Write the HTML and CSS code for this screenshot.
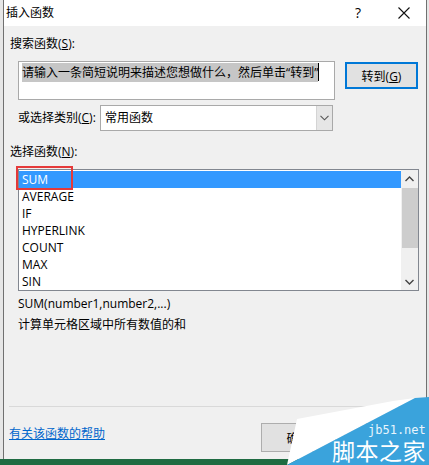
FILE: index.html
```html
<!DOCTYPE html>
<html lang="zh-CN">
<head>
<meta charset="utf-8">
<title>插入函数</title>
<link rel="stylesheet" href="styles.css">
</head>
<body>
<div class="screen">
  <div class="dialog">
    <div class="titlebar">
      <span class="title">插入函数</span>
      <span class="help">?</span>
      <span class="close"><svg width="12" height="12" viewBox="0 0 12 12"><path d="M0.5 0.5 L11.5 11.5 M11.5 0.5 L0.5 11.5" stroke="#111" stroke-width="1.1" fill="none"/></svg></span>
    </div>
    <div class="content">
      <div class="label l1">搜索函数(<u>S</u>):</div>
      <div class="search-row">
        <div class="search"><span class="selected">请输入一条简短说明来描述您想做什么，然后单击“转到”</span><span class="caret"></span></div>
        <button class="btn btn-go">转到(<u>G</u>)</button>
      </div>
      <div class="cat-row">
        <span class="cat-label">或选择类别(<u>C</u>):</span>
        <div class="select">
          <span class="val">常用函数</span>
          <span class="drop"><svg width="9" height="6" viewBox="0 0 9 6"><path d="M0.5 0.8 L4.5 4.8 L8.5 0.8" stroke="#555" stroke-width="1.1" fill="none"/></svg></span>
        </div>
      </div>
      <div class="label l2">选择函数(<u>N</u>):</div>
      <div class="listbox">
        <ul class="items">
          <li class="sel">SUM</li>
          <li>AVERAGE</li>
          <li>IF</li>
          <li>HYPERLINK</li>
          <li>COUNT</li>
          <li>MAX</li>
          <li>SIN</li>
        </ul>
        <div class="scrollbar">
          <div class="arrow"><svg width="9" height="6" viewBox="0 0 9 6"><path d="M0.5 5 L4.5 1 L8.5 5" stroke="#444" stroke-width="1.4" fill="none"/></svg></div>
          <div class="track"><div class="thumb"></div></div>
          <div class="arrow"><svg width="9" height="6" viewBox="0 0 9 6"><path d="M0.5 1 L4.5 5 L8.5 1" stroke="#444" stroke-width="1.4" fill="none"/></svg></div>
        </div>
        <div class="redbox"></div>
      </div>
      <div class="sig">SUM(number1,number2,...)</div>
      <div class="desc">计算单元格区域中所有数值的和</div>
      <div class="sep"></div>
      <div class="footer">
        <a class="help-link" href="#">有关该函数的帮助</a>
        <div class="buttons">
          <button class="btn">确定</button>
          <span class="btn btn-hidden"></span>
        </div>
      </div>
    </div>
  </div>
  <div class="taskbar"></div>
  <div class="watermark">
    <svg class="wm-shape" width="149" height="70" viewBox="0 0 149 70">
      <polygon points="7,70 17,24 113,6 135,3" fill="#ffffff"/>
      <polygon points="7,70 135,3 149,2 149,70" fill="#3aa3dc"/>
    </svg>
    <div class="wm-url">jb51.net</div>
    <div class="wm-name">脚本之家</div>
  </div>
</div>
</body>
</html>
```

FILE: styles.css
```css
* { box-sizing: border-box; }
html, body { margin: 0; padding: 0; }
body {
  width: 429px;
  height: 465px;
  overflow: hidden;
  background: #e6e6e6;
  font-family: "Open Sans", "Noto Sans CJK SC", sans-serif;
  font-size: 12px;
  color: #000;
}
.screen {
  position: relative;
  width: 429px;
  height: 465px;
  display: flex;
  flex-direction: column;
}
.dialog {
  margin-left: 3px;
  width: 424px;
  height: 459px;
  border-left: 1px solid #707070;
  border-right: 1px solid #707070;
  background: #f0f0f0;
  display: flex;
  flex-direction: column;
}
.taskbar { flex: 1; background: #1f6b42; }

.titlebar {
  height: 26px;
  background: #fff;
  display: flex;
  align-items: center;
  padding-left: 2px;
}
.title { flex: 1; line-height: 16px; }
.help {
  width: 30px;
  margin-right: 8px;
  text-align: center;
  font-size: 14px;
  line-height: 16px;
}
.close {
  width: 45px;
  display: flex;
  justify-content: center;
  align-items: center;
}

.content { padding-left: 6px; }
.label { line-height: 16px; }
.l1 { margin-top: 10px; }
.l2 { margin-top: 13px; }

.search-row { display: flex; margin: 9px 0 0 8px; }
.search {
  width: 317px;
  height: 39px;
  border: 1px solid #a9a9a9;
  background: #fff;
  padding: 1px 0 0 3px;
  display: flex;
  align-items: flex-start;
}
.selected {
  display: inline-block;
  line-height: 19px;
  background: #c6c6c6;
  white-space: nowrap;
}
.caret { width: 1px; height: 18px; background: #000; }

.btn {
  font-family: inherit;
  font-size: 12px;
  color: #000;
  background: #e1e1e1;
  border: 1px solid #adadad;
  padding: 0;
  height: 29px;
  width: 75px;
}
.btn-hidden { display: block; }
.btn-go {
  margin: 1px 0 0 10px;
  width: 73px;
  height: 27px;
  border: 2px solid #0078d7;
}

.cat-row {
  display: flex;
  align-items: center;
  margin: 5px 0 0 8px;
  height: 26px;
}
.cat-label { width: 82px; line-height: 16px; }
.select {
  width: 233px;
  height: 26px;
  border: 1px solid #a9a9a9;
  background: #fff;
  display: flex;
}
.select .val { flex: 1; padding-left: 4px; line-height: 24px; }
.drop {
  width: 16px;
  background: #e6e6e6;
  border-left: 1px solid #d4d4d4;
  display: flex;
  align-items: center;
  justify-content: center;
}

.listbox {
  position: relative;
  margin: 9px 0 0 8px;
  width: 401px;
  height: 122px;
  border: 1px solid #828790;
  background: #fff;
  display: flex;
}
.items { flex: 1; list-style: none; margin: 0; padding: 1px 0 0 0; }
.items li { height: 17px; line-height: 17px; padding-left: 3px; }
.items li.sel { background: #3399ff; color: #fff; }
.scrollbar {
  width: 17px;
  background: #f0f0f0;
  display: flex;
  flex-direction: column;
}
.arrow { height: 17px; display: flex; align-items: center; justify-content: center; }
.track { flex: 1; padding: 1px 0 0 1px; }
.thumb { height: 60px; background: #cdcdcd; }
.redbox {
  position: absolute;
  left: -3px;
  top: -4px;
  width: 57px;
  height: 24px;
  border: 2px solid #e53a3a;
}

.sig { margin: 5px 0 0 8px; line-height: 16px; }
.desc { margin: 5px 0 0 8px; line-height: 16px; }
.sep {
  margin: 73px 0 0 -1px;
  width: 409px;
  height: 1px;
  background: #d9d9d9;
}
.footer { display: flex; margin-top: 16px; }
.help-link {
  flex: 1;
  margin: 3px 0 0 -1px;
  line-height: 16px;
  color: #0066cc;
  text-decoration: underline;
}
.buttons { display: flex; gap: 8px; margin-right: 7px; }

.watermark {
  position: absolute;
  left: 280px;
  top: 395px;
  width: 149px;
  height: 70px;
}
.wm-shape { position: absolute; left: 0; top: 0; }
.wm-url {
  position: absolute;
  left: 88px;
  top: 29px;
  font-family: "DejaVu Sans Mono", monospace;
  font-size: 12px;
  line-height: 12px;
  color: #e8f5fd;
}
.wm-name {
  position: absolute;
  left: 52px;
  top: 44px;
  font-family: "Noto Sans CJK SC", sans-serif;
  font-size: 23px;
  line-height: 23px;
  color: #fff;
  letter-spacing: 0.5px;
}
```
